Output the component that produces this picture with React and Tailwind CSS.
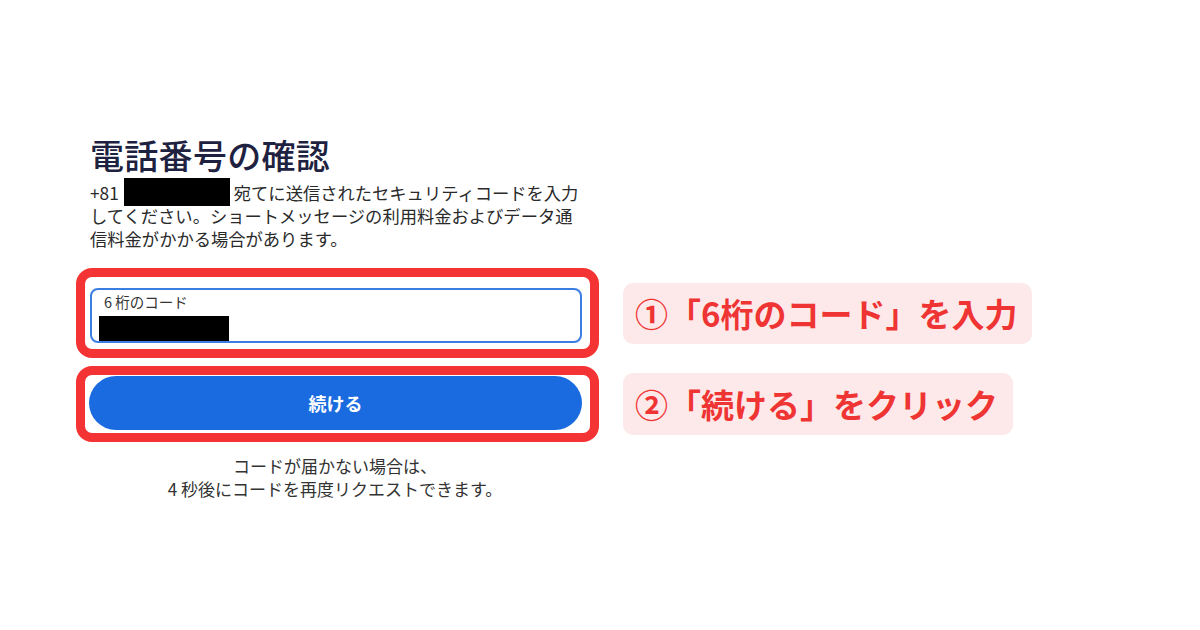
import React from "react";

export default function App() {
  return (
    <div className="w-[1200px] h-[630px] bg-white overflow-hidden pt-[135px] pl-[76px] font-['Noto_Sans_CJK_JP','Noto_Sans',sans-serif]">
      <div className="pl-[14px]">
        <h1 className="text-[34px] leading-[40px] font-medium text-[#1e2240] tracking-[0.3px]">電話番号の確認</h1>
        <p className="mt-[6px] text-[17.3px] leading-[23px] text-[#2a2a2a]">
          +81
          <span className="inline-block align-top w-[106px] h-[28px] -my-[3px] ml-[5px] mr-[4px] bg-black"></span>
          宛てに送信されたセキュリティコードを入力
          <br />
          してください。ショートメッセージの利用料金およびデータ通
          <br />
          信料金がかかる場合があります。
        </p>
      </div>

      <div className="mt-[18px] flex items-center gap-[24px]">
        <div className="w-[523px] h-[90px] border-[9px] border-[#f43434] rounded-[16px] pt-[11px] pl-[5px] pr-[8px]">
          <div className="h-[55px] border-2 border-[#3a7ee2] rounded-[8px] overflow-hidden">
            <div className="ml-[12px] mt-[3px] text-[14.5px] leading-[18px] text-[#333]">6 桁のコード</div>
            <div className="ml-[7px] mt-[5px] w-[130px] h-[28px] bg-black"></div>
          </div>
        </div>
        <div className="h-[61px] pl-[12px] pr-[15px] bg-[#fde9e9] rounded-[10px] flex items-center text-[33px] leading-none font-bold text-[#ef3434]">
          ①「6桁のコード」を入力
        </div>
      </div>

      <div className="mt-[8px] flex items-center gap-[24px]">
        <div className="w-[523px] h-[76px] border-[9px] border-[#f43434] rounded-[16px] pt-[1px] pl-[4px] pr-[8px]">
          <div className="h-[54px] rounded-full bg-[#1a6ae0] flex items-center justify-center text-[18px] font-bold text-white">
            続ける
          </div>
        </div>
        <div className="h-[62px] pl-[12px] pr-[15px] bg-[#fde9e9] rounded-[10px] flex items-center text-[33px] leading-none font-bold text-[#ef3434]">
          ②「続ける」をクリック
        </div>
      </div>

      <div className="mt-[12px] ml-[14px] w-[490px] text-center text-[17px] leading-[23px] text-[#333]">
        コードが届かない場合は、
        <br />4 秒後にコードを再度リクエストできます。
      </div>
    </div>
  );
}
